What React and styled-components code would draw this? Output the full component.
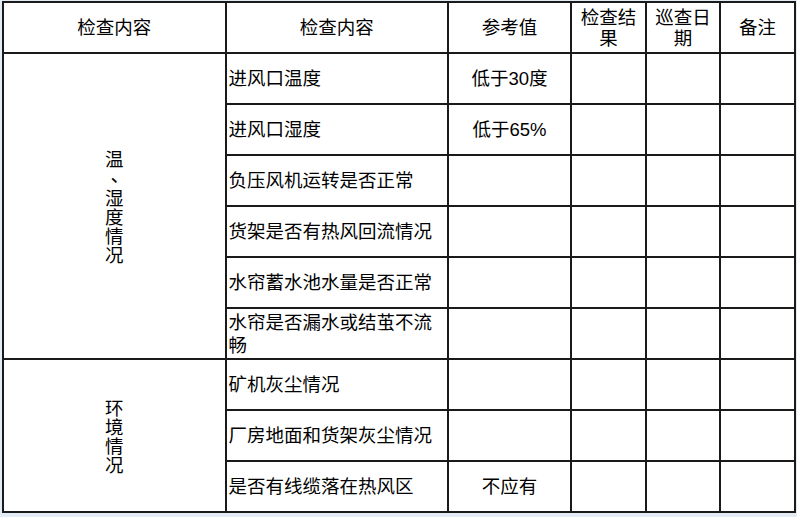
import React from "react";
import styled, { createGlobalStyle } from "styled-components";

const GlobalStyle = createGlobalStyle`
  html, body {
    margin: 0;
    padding: 0;
    background: #e3ebf4;
  }
  body {
    font-family: "Liberation Sans", "Noto Sans CJK SC", sans-serif;
    color: #000;
  }
`;

const Sheet = styled.table`
  margin: 1px 0 0 2px;
  width: 794px;
  table-layout: fixed;
  border-collapse: collapse;
  background: #fff;
  font-size: 18.5px;
  line-height: 23px;
`;

const Cell = styled.td`
  border: 2px solid #1a1a1a;
  height: 49px;
  padding: 0 2px;
  vertical-align: middle;
  text-align: ${(p) => (p.$left ? "left" : "center")};
  word-break: break-all;
`;

const HeadCell = styled(Cell).attrs({ as: "th" })`
  font-weight: normal;
  line-height: 21px;
`;

const Stack = styled.span`
  display: inline-flex;
  flex-direction: column;
  align-items: center;
  line-height: ${(p) => p.$pitch}px;
`;

// 顿号 sits centred in the TC face, closer to the reference glyph
const Mark = styled.span`
  font-family: "Noto Sans CJK TC", sans-serif;
  height: 20px;
  line-height: 20px;
`;

const columns = [222.5, 222.5, 123, 75, 74, 75];

const groups = [
  {
    title: ["温", "、", "湿", "度", "情", "况"],
    pitch: 19,
    rows: [
      ["进风口温度", "低于30度"],
      ["进风口湿度", "低于65%"],
      ["负压风机运转是否正常", ""],
      ["货架是否有热风回流情况", ""],
      ["水帘蓄水池水量是否正常", ""],
      ["水帘是否漏水或结茧不流畅", ""],
    ],
  },
  {
    title: ["环", "境", "情", "况"],
    pitch: 19,
    rows: [
      ["矿机灰尘情况", ""],
      ["厂房地面和货架灰尘情况", ""],
      ["是否有线缆落在热风区", "不应有"],
    ],
  },
];

export default function App() {
  return (
    <>
      <GlobalStyle />
      <Sheet>
        <colgroup>
          {columns.map((w, i) => (
            <col key={i} style={{ width: w }} />
          ))}
        </colgroup>
        <thead>
          <tr>
            <HeadCell>检查内容</HeadCell>
            <HeadCell>检查内容</HeadCell>
            <HeadCell>参考值</HeadCell>
            <HeadCell>检查结果</HeadCell>
            <HeadCell>巡查日期</HeadCell>
            <HeadCell>备注</HeadCell>
          </tr>
        </thead>
        <tbody>
          {groups.map((g) =>
            g.rows.map(([item, ref], i) => (
              <tr key={g.title.join("") + i}>
                {i === 0 && (
                  <Cell rowSpan={g.rows.length}>
                    <Stack $pitch={g.pitch}>
                      {g.title.map((ch, k) =>
                        ch === "、" ? <Mark key={k}>{ch}</Mark> : <span key={k}>{ch}</span>
                      )}
                    </Stack>
                  </Cell>
                )}
                <Cell $left>{item}</Cell>
                <Cell>{ref}</Cell>
                <Cell />
                <Cell />
                <Cell />
              </tr>
            ))
          )}
        </tbody>
      </Sheet>
    </>
  );
}
